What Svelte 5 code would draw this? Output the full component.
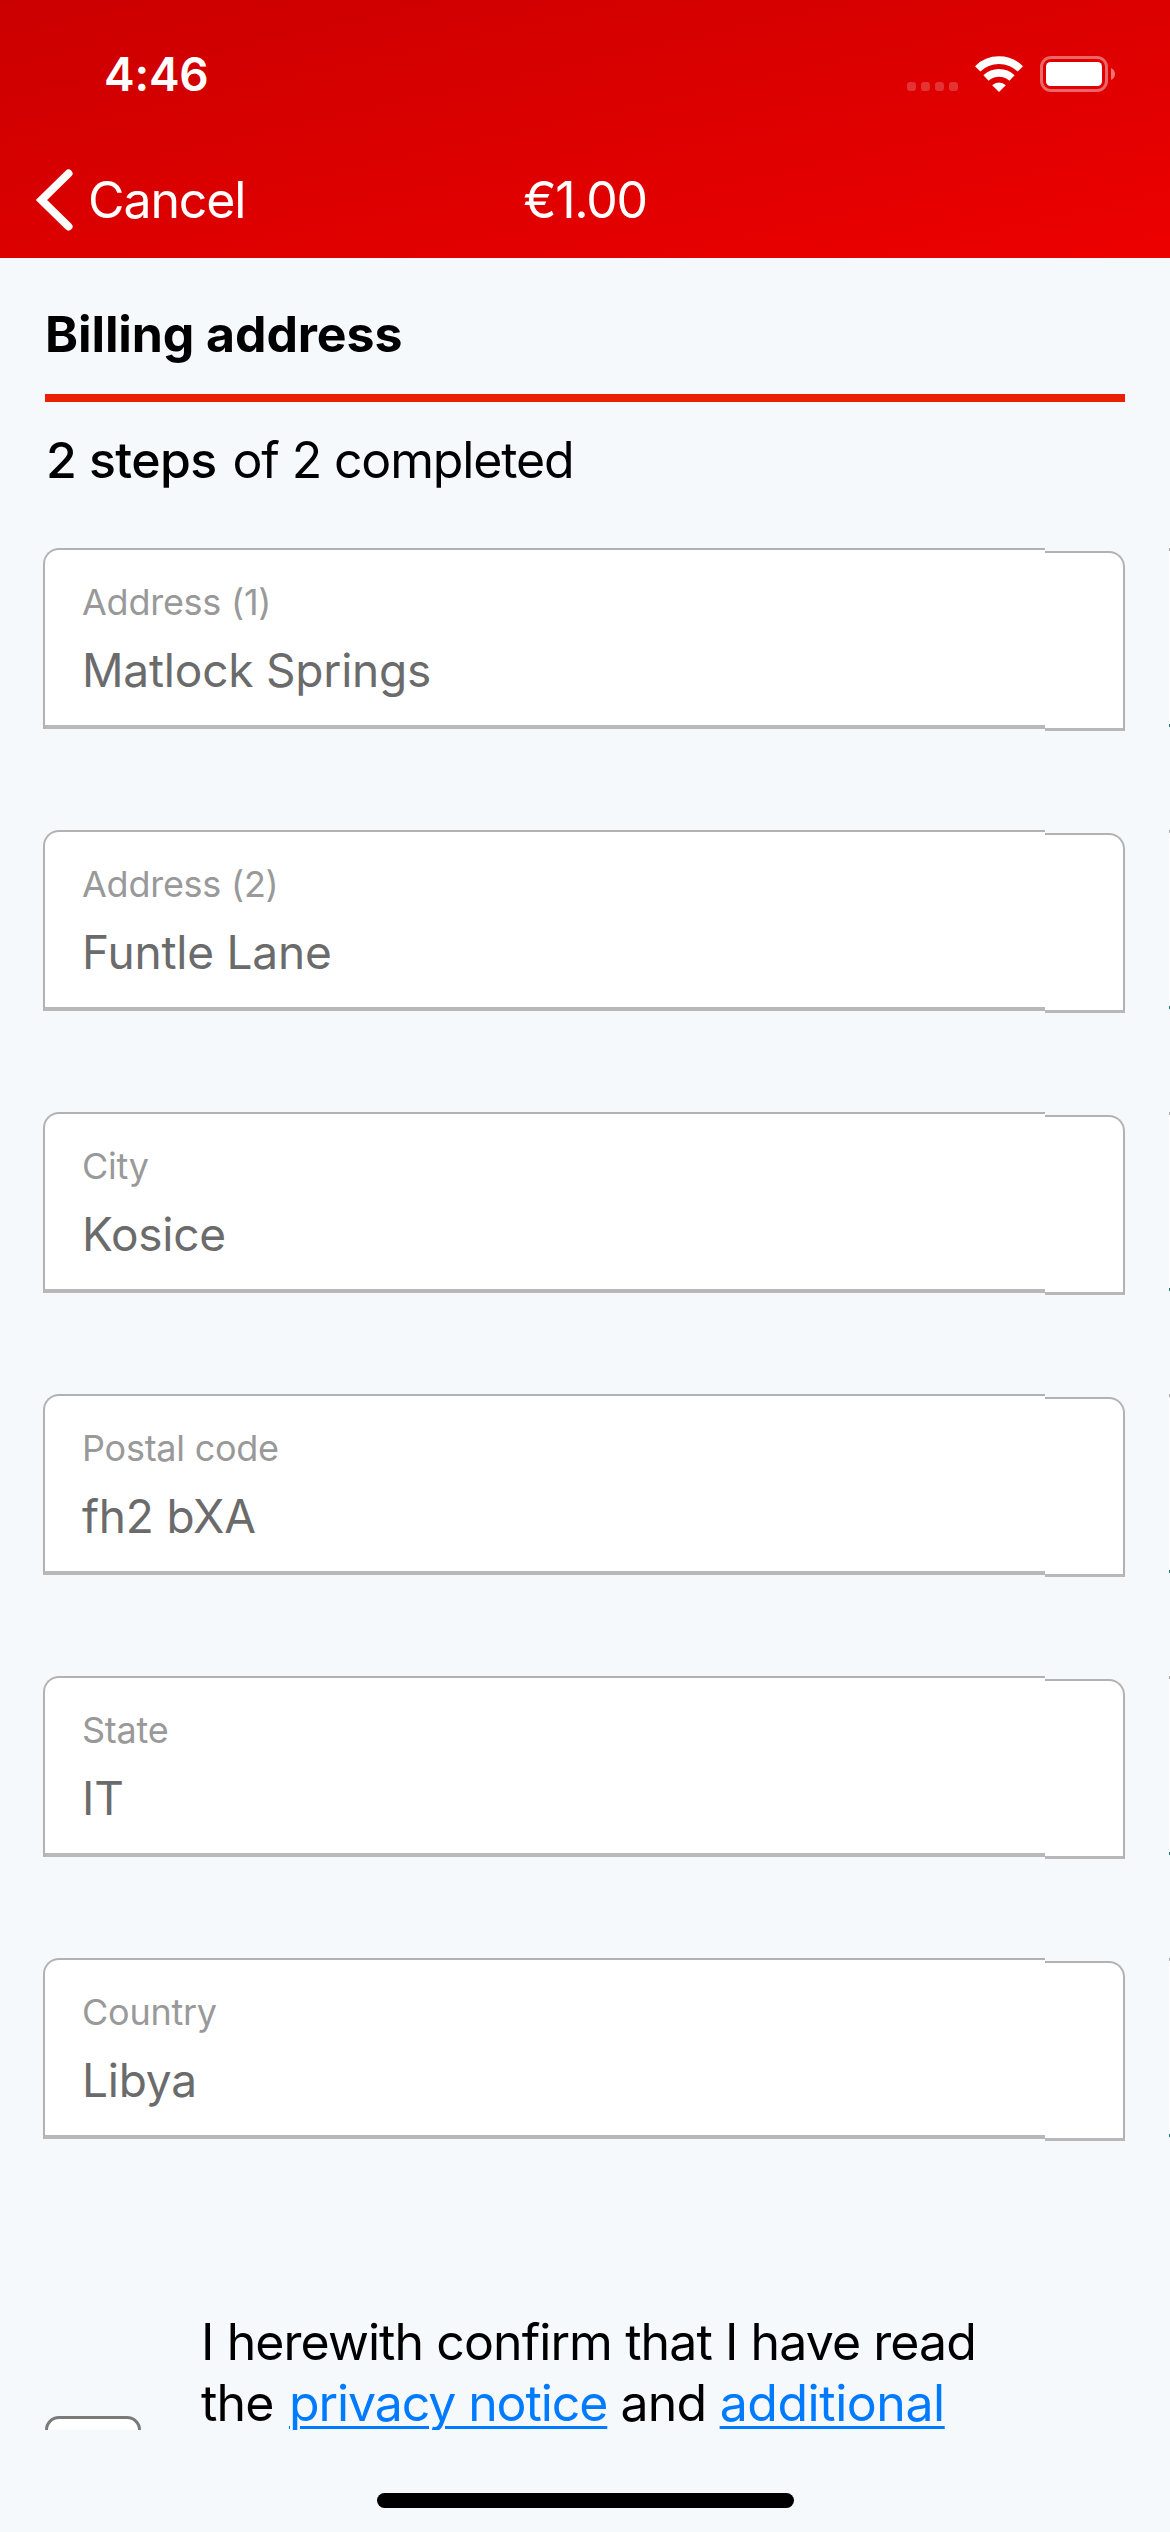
<script>
  const fields = [
    { label: 'Address (1)', value: 'Matlock Springs' },
    { label: 'Address (2)', value: 'Funtle Lane' },
    { label: 'City', value: 'Kosice' },
    { label: 'Postal code', value: 'fh2 bXA' },
    { label: 'State', value: 'IT' },
    { label: 'Country', value: 'Libya' },
  ];
</script>

<div class="screen">
  <header>
    <div class="status">
      <span class="time">4:46</span>
      <div class="indicators">
        <div class="dots"><i></i><i></i><i></i><i></i></div>
        <svg class="wifi" width="48" height="36" viewBox="0 0 48 36">
          <g fill="none" stroke="#fff" stroke-width="7.6">
            <path d="M2.6 12.9 A30.5 30.5 0 0 1 45.4 12.9" />
            <path d="M11 22 A19 19 0 0 1 37 22" />
          </g>
          <path fill="#fff" d="M24 36 L17.2 29.2 A9.8 9.8 0 0 1 30.8 29.2 Z" />
        </svg>
        <svg class="battery" width="76" height="36" viewBox="0 0 76 36">
          <rect x="1.5" y="1.5" width="65" height="33" rx="9.5" fill="none" stroke="#fff" stroke-opacity=".4" stroke-width="3" />
          <rect x="6" y="6" width="56" height="24" rx="4.5" fill="#fff" />
          <path d="M71 12 Q75 14 75 18 Q75 22 71 24 Z" fill="#fff" fill-opacity=".45" />
        </svg>
      </div>
    </div>
    <nav>
      <a class="back" href="#cancel">
        <svg width="38" height="62" viewBox="0 0 38 62">
          <path d="M32.5 4.5 L5.5 31 L32.5 57.5" fill="none" stroke="#fff" stroke-width="8" stroke-linecap="round" />
        </svg>
        <span>Cancel</span>
      </a>
      <span class="amount">€1.00</span>
    </nav>
  </header>

  <main>
    <h1>Billing address</h1>
    <p class="progress"><b>2 steps</b> <span>of 2 completed</span></p>

    <div class="fields">
      {#each fields as field}
        <div class="row">
          <div class="body">
            <span class="label">{field.label}</span>
            <span class="value">{field.value}</span>
          </div>
          <div class="cap"></div>
          <div class="next"></div>
        </div>
      {/each}
    </div>

    <div class="consent">
      <div class="check"></div>
      <p>
        <span class="line first">I herewith confirm that I have read</span>
        <span class="line second">the <a class="privacy" href="#privacy">privacy notice</a> and <a class="additional" href="#additional">additional</a></span>
      </p>
    </div>
  </main>

  <footer><div class="home"></div></footer>
</div>

<style>
  :global(body) { background: #f5f9fc; }
  .screen {
    width: 1170px; height: 2532px; overflow: hidden;
    display: flex; flex-direction: column;
    background: #f5f9fc; color: #000;
    font-family: Inter, "Liberation Sans", sans-serif;
  }
  .screen * { box-sizing: border-box; }
  header {
    height: 258px; flex: none; color: #fff;
    background: linear-gradient(to bottom right, #cb0000, #ed0000);
  }
  .status {
    height: 148px; padding: 0 54px 0 104px;
    display: flex; justify-content: space-between; align-items: center;
  }
  .time { font-size: 46px; font-weight: 600; line-height: 56px; letter-spacing: -.2px; }
  .indicators { display: flex; align-items: center; }
  .dots { display: flex; gap: 5px; margin: 25px 17px 0 0; }
  .dots i { width: 9px; height: 9px; border-radius: 3px; background: rgba(255, 255, 255, .2); }
  .wifi { margin: -1px 17px 0 0; }
  nav {
    height: 110px; padding: 0 36px;
    display: grid; grid-template-columns: 1fr auto 1fr; align-items: start;
    font-size: 50px; line-height: 60px;
  }
  .back { display: flex; gap: 14px; color: #fff; text-decoration: none; padding-top: 21px; }
  .back span { padding-top: 1px; letter-spacing: -1.1px; }
  .amount { padding-top: 22px; letter-spacing: -1.3px; }
  main { height: 2172px; flex: none; overflow: hidden; }
  h1 {
    margin: 0 45px; height: 144px; padding-top: 46px;
    border-bottom: 8px solid #eb2000;
    font-size: 50px; line-height: 60px; font-weight: 700; letter-spacing: -.1px;
  }
  .progress {
    margin: 28px 0 0; padding-left: 46px; height: 118px;
    font-size: 50px; line-height: 60px; letter-spacing: -1.15px; white-space: nowrap;
  }
  .progress b { font-weight: 500; letter-spacing: -.6px; margin-right: 3px; }
  .fields { display: flex; flex-direction: column; gap: 98px; padding-left: 43px; }
  .row { display: flex; height: 184px; }
  .body {
    width: 1002px; height: 181px; padding: 28px 0 0 37px;
    display: flex; flex-direction: column;
    background: #fff; border: 2px solid #b2b2b2; border-right: 0;
    border-bottom: 4px solid #b8b8b8; border-top-left-radius: 16px;
  }
  .label { font-size: 36px; line-height: 48px; color: #999; letter-spacing: -.25px; }
  .value { font-size: 46px; line-height: 56px; margin-top: 16px; color: #6b6b6b; letter-spacing: -.2px; }
  .cap {
    width: 80px; height: 180px; margin-top: 3px;
    background: #fff; border: 2px solid #b2b2b2; border-left: 0;
    border-bottom: 3px solid #b8b8b8; border-top-right-radius: 16px;
  }
  .next {
    width: 1px; height: 179px; margin-left: 44px;
    background: #fff; border-top: 3px solid #aaa; border-bottom: 3px solid #1f7f7b;
  }
  .consent { display: flex; margin-top: 170px; padding-left: 45px; }
  .check {
    width: 96px; height: 96px; margin-top: 104px; flex: none;
    background: #fff; border: 3px solid #7a7a7a; border-radius: 14px;
  }
  .consent p { margin: 0 0 0 60px; font-size: 50px; line-height: 61px; white-space: nowrap; }
  .line { display: block; }
  .first { letter-spacing: -.92px; }
  .second { letter-spacing: -.8px; }
  .consent a { color: #007aff; text-decoration: underline; text-decoration-thickness: 3px; text-underline-offset: 5px; }
  .consent .privacy { margin-left: 2px; letter-spacing: -1.1px; }
  .consent .additional { letter-spacing: -.45px; }
  footer { flex: 1; padding-top: 63px; }
  .home { width: 417px; height: 15px; margin: 0 auto; border-radius: 8px; background: #000; }
</style>
